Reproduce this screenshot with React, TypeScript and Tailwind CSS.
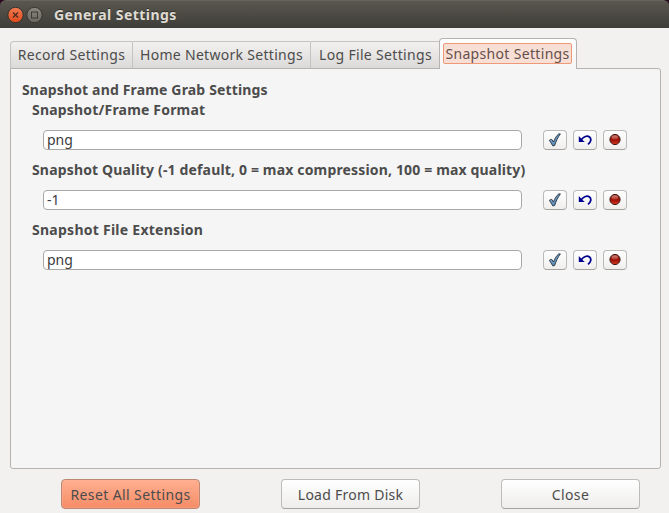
import React from "react";

const tabs = [
  { label: "Record Settings", box: "w-[122px] rounded-tl-[4px]", text: "tracking-[0.3px]" },
  { label: "Home Network Settings", box: "w-[178px] rounded-tl-[2px]", text: "tracking-[0.3px]" },
  { label: "Log File Settings", box: "w-[130px] rounded-tl-[2px]", text: "tracking-[0.33px]" },
];

const fields = [
  { label: "Snapshot/Frame Format", value: "png", text: "tracking-[0.19px]" },
  { label: "Snapshot Quality (-1 default, 0 = max compression, 100 = max quality)", value: "-1", text: "tracking-[0.16px]" },
  { label: "Snapshot File Extension", value: "png", text: "tracking-[0.26px]" },
];

function CheckIcon() {
  return (
    <svg width="14" height="14" viewBox="0 0 14 14">
      <defs>
        <linearGradient id="check" x1="0" y1="0" x2="1" y2="1">
          <stop offset="0" stopColor="#8db4d8" />
          <stop offset="1" stopColor="#4478a8" />
        </linearGradient>
      </defs>
      <path d="M1.4 7.2 L3.7 6.3 L5.5 9 C6.6 5.6 8.5 2.6 10.9 0.8 L12.4 0.9 C9.9 4.3 8 8.1 6.7 12.5 L4.8 12.9 Z" fill="url(#check)" stroke="#2b3640" strokeWidth="0.9" strokeLinejoin="round" />
    </svg>
  );
}

function UndoIcon() {
  return (
    <svg width="14" height="14" viewBox="0 0 14 14">
      <path d="M0.8 3 V9 H6.8 L4.8 7.2" fill="#000090" />
      <path d="M3 7 C5.5 3.5 9.2 2.3 11.5 4 C13.8 6 13 9 10 11.4" fill="none" stroke="#000090" strokeWidth="1.7" />
    </svg>
  );
}

function RecordIcon() {
  return (
    <svg width="14" height="14" viewBox="0 0 14 14">
      <defs>
        <linearGradient id="record" x1="0" y1="0" x2="0" y2="1">
          <stop offset="0" stopColor="#8c160b" />
          <stop offset="0.6" stopColor="#a31408" />
          <stop offset="1" stopColor="#e13c21" />
        </linearGradient>
        <linearGradient id="shine" x1="0" y1="0" x2="0" y2="1">
          <stop offset="0" stopColor="#e8aaa2" />
          <stop offset="1" stopColor="#b5392b" />
        </linearGradient>
      </defs>
      <circle cx="7" cy="6.5" r="5.1" fill="url(#record)" stroke="#3c1714" strokeWidth="1" />
      <ellipse cx="6.8" cy="4.4" rx="3.2" ry="2.1" fill="url(#shine)" opacity="0.75" />
    </svg>
  );
}

function IconButton({ label, children }: { label: string; children: React.ReactNode }) {
  return (
    <button aria-label={label} className="flex h-5 w-6 items-center justify-center rounded-[4px] border border-[#bcbab7] border-b-[#a5a39f] bg-linear-to-b from-white to-[#f0efee]">
      {children}
    </button>
  );
}

export default function App() {
  return (
    <div className="h-[513px] w-[669px] overflow-hidden bg-[#f2f1f0] font-['Noto_Sans','Open_Sans',sans-serif] text-[14px] leading-5 text-[#4c4c4c]">
      <header className="h-7 bg-[#2a0a20]">
        <div className="flex h-7 items-center rounded-t-[6px] border-t border-[#66645b] bg-linear-to-b from-[#59574f] to-[#3e3d39] pl-[7px]">
          <svg width="37" height="18" viewBox="0 0 37 18">
            <defs>
              <linearGradient id="close" x1="0" y1="0" x2="0" y2="1">
                <stop offset="0" stopColor="#f37b52" />
                <stop offset="1" stopColor="#de4a1c" />
              </linearGradient>
              <linearGradient id="maximize" x1="0" y1="0" x2="0" y2="1">
                <stop offset="0" stopColor="#89877e" />
                <stop offset="1" stopColor="#68665f" />
              </linearGradient>
            </defs>
            <circle cx="8.5" cy="9" r="7.7" fill="url(#close)" stroke="#34332f" strokeWidth="1" />
            <path d="M6 6.5 L11 11.5 M11 6.5 L6 11.5" stroke="#4b2b20" strokeWidth="1.2" />
            <circle cx="27.5" cy="9" r="7.7" fill="url(#maximize)" stroke="#363530" strokeWidth="1" />
            <rect x="24.5" y="6" width="6" height="6" fill="none" stroke="#3c3b37" />
          </svg>
          <h1 className="ml-[10px] whitespace-nowrap font-bold leading-5 tracking-[0.45px] text-[#dfdbd2] [text-shadow:0_-1px_#33322e]">General Settings</h1>
        </div>
      </header>
      <main className="px-[10px] pt-[10px]">
        <nav className="flex h-[31px] items-end">
          {tabs.map((tab) => (
            <button key={tab.label} className={`flex h-[28px] shrink-0 items-center justify-center whitespace-nowrap border border-r-0 border-[#c5c3c0] border-b-[#b6b3af] bg-linear-to-b from-[#f2f1f0] to-[#dcdad8] ${tab.box}`}>
              <span className={tab.text}>{tab.label}</span>
            </button>
          ))}
          <button className="z-10 -ml-px flex h-[31px] w-[138px] shrink-0 items-start justify-start rounded-t-[4px] border border-b-0 border-[#b6b3af] bg-linear-to-b from-white to-[#f5f5f5] pl-[3px] pt-1">
            <span className="flex h-[21px] w-[129px] items-center justify-center whitespace-nowrap rounded-[2px] border border-[#ee9877] bg-[#f8dfd6] tracking-[0.33px] text-[#66504b]">Snapshot Settings</span>
          </button>
        </nav>
        <section className="-mt-px h-[401px] w-[651px] rounded-[3px] rounded-tl-none border border-[#b6b3af] bg-[#f5f5f5] pl-[11px] pt-[11px]">
          <h2 className="whitespace-nowrap font-bold leading-5 tracking-[0.16px]">Snapshot and Frame Grab Settings</h2>
          {fields.map((field) => (
            <div key={field.label} className="h-[60px] pl-[10px]">
              <label className={`block h-5 whitespace-nowrap font-bold ${field.text}`}>{field.label}</label>
              <div className="flex pl-[11px] pt-[10px]">
                <input defaultValue={field.value} className="h-5 w-[479px] rounded-[4px] border border-[#aaa8a5] bg-white px-[3px] pb-[2px] leading-4 text-[#3c3c3c] outline-none" />
                <div className="ml-[21px] flex gap-[6px]">
                  <IconButton label="Apply"><CheckIcon /></IconButton>
                  <IconButton label="Undo"><UndoIcon /></IconButton>
                  <IconButton label="Reset"><RecordIcon /></IconButton>
                </div>
              </div>
            </div>
          ))}
        </section>
        <footer className="flex gap-[81px] pl-[51px] pt-[10px]">
          <button className="h-[30px] w-[139px] whitespace-nowrap rounded-[4px] border border-[#bd8873] bg-linear-to-b from-[#ffaf91] to-[#f58c66] pt-[2px] tracking-[0.4px] shadow-[inset_0_0_0_1px_#ffb59a55]">Reset All Settings</button>
          <button className="h-[30px] w-[139px] whitespace-nowrap rounded-[4px] border border-[#bebcb9] border-b-[#a5a39f] bg-linear-to-b from-white to-[#eeedec] pt-[2px] tracking-[0.25px]">Load From Disk</button>
          <button className="h-[30px] w-[139px] whitespace-nowrap rounded-[4px] border border-[#bebcb9] border-b-[#a5a39f] bg-linear-to-b from-white to-[#eeedec] pt-[2px] tracking-[0.4px]">Close</button>
        </footer>
      </main>
    </div>
  );
}
